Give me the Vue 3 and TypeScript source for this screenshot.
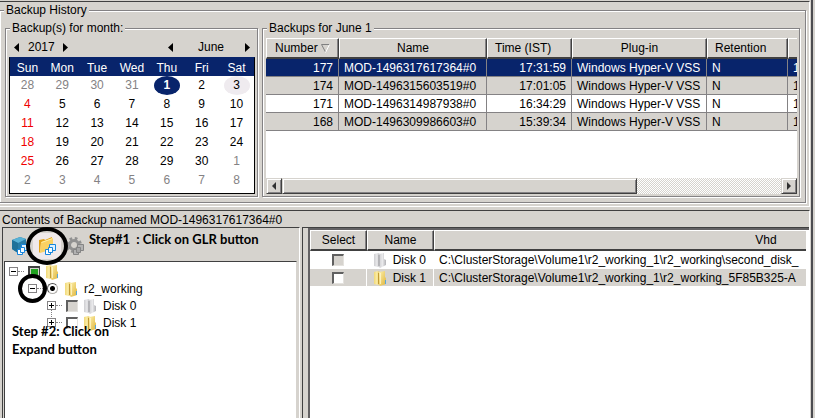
<script setup lang="ts">
import { ref } from 'vue'

interface Backup {
  id: number
  name: string
  time: string
  plugin: string
  retention: string
  extra: string
}
interface Disk {
  name: string
  path: string
  available: boolean
}

const weekdays: string[] = ['Sun', 'Mon', 'Tue', 'Wed', 'Thu', 'Fri', 'Sat']
const firstOffset = -4

const weeks = Array.from({ length: 6 }, (_, w) =>
  Array.from({ length: 7 }, (_, d) => {
    const n = w * 7 + d + 1 + firstOffset
    const outside = n < 1 || n > 30
    const day = n < 1 ? 31 + n : n > 30 ? n - 30 : n
    return { day, outside, sunday: d === 0 && !outside, today: n === 3, key: n }
  }),
)
const selectedDay = ref<number>(1)

const backups: Backup[] = [
  { id: 177, name: 'MOD-1496317617364#0', time: '17:31:59', plugin: 'Windows Hyper-V VSS', retention: 'N', extra: '1' },
  { id: 174, name: 'MOD-1496315603519#0', time: '17:01:05', plugin: 'Windows Hyper-V VSS', retention: 'N', extra: '1' },
  { id: 171, name: 'MOD-1496314987938#0', time: '16:34:29', plugin: 'Windows Hyper-V VSS', retention: 'N', extra: '1' },
  { id: 168, name: 'MOD-1496309986603#0', time: '15:39:34', plugin: 'Windows Hyper-V VSS', retention: 'N', extra: '1' },
]
const selectedBackup = ref<number>(177)

const disks: Disk[] = [
  { name: 'Disk 0', path: 'C:\\ClusterStorage\\Volume1\\r2_working_1\\r2_working\\second_disk_', available: false },
  { name: 'Disk 1', path: 'C:\\ClusterStorage\\Volume1\\r2_working_1\\r2_working_5F85B325-A', available: true },
]
</script>

<template>
  <main class="window">
    <section class="upper">
      <fieldset class="group history">
        <legend>Backup History</legend>
        <div class="columns">
          <fieldset class="group month">
            <legend>Backup(s) for month:</legend>
            <div class="nav">
              <button type="button" class="step" aria-label="Previous year"><svg width="5" height="9" viewBox="0 0 5 9"><path d="M5 0v9L0 4.500z" /></svg></button>
              <span class="year">2017</span>
              <button type="button" class="step" aria-label="Next year"><svg width="5" height="9" viewBox="0 0 5 9"><path d="M0 0v9l5-4.500z" /></svg></button>
              <button type="button" class="step month-prev" aria-label="Previous month"><svg width="5" height="9" viewBox="0 0 5 9"><path d="M5 0v9L0 4.500z" /></svg></button>
              <span class="month-name">June</span>
              <button type="button" class="step" aria-label="Next month"><svg width="5" height="9" viewBox="0 0 5 9"><path d="M0 0v9l5-4.500z" /></svg></button>
            </div>
            <div class="calendar-box">
              <table class="calendar">
                <thead>
                  <tr><th v-for="w in weekdays" :key="w">{{ w }}</th></tr>
                </thead>
                <tbody>
                  <tr v-for="(week, i) in weeks" :key="i">
                    <td v-for="d in week" :key="d.key">
                      <button
                        type="button"
                        class="day"
                        :class="{ outside: d.outside, sunday: d.sunday, today: d.today, selected: d.key === selectedDay }"
                        @click="selectedDay = d.key"
                      >{{ d.day }}</button>
                    </td>
                  </tr>
                </tbody>
              </table>
            </div>
          </fieldset>

          <fieldset class="group list">
            <legend>Backups for June 1</legend>
            <div class="list-view">
              <table class="backups">
                <colgroup>
                  <col class="c-number" /><col class="c-name" /><col class="c-time" /><col class="c-plugin" /><col class="c-ret" /><col class="c-extra" />
                </colgroup>
                <thead>
                  <tr>
                    <th>Number
                      <svg class="sort" width="9" height="9" viewBox="0 0 9 9"><path d="M4.500 8L.5.500h8" fill="none" stroke="#808080" /><path d="M8.500.500l-4 8" stroke="#fff" /></svg>
                    </th>
                    <th>Name</th>
                    <th class="start">Time (IST)</th>
                    <th>Plug-in</th>
                    <th class="start">Retention</th>
                    <th></th>
                  </tr>
                </thead>
                <tbody>
                  <tr v-for="b in backups" :key="b.id" :class="{ selected: b.id === selectedBackup }" @click="selectedBackup = b.id">
                    <td class="num">{{ b.id }}</td>
                    <td>{{ b.name }}</td>
                    <td class="num">{{ b.time }}</td>
                    <td>{{ b.plugin }}</td>
                    <td>{{ b.retention }}</td>
                    <td>{{ b.extra }}</td>
                  </tr>
                </tbody>
              </table>
            </div>
            <div class="scrollbar">
              <button type="button" class="raised arrow" aria-label="Scroll left"><svg width="4" height="8" viewBox="0 0 4 8"><path d="M4 0v8L0 4z" /></svg></button>
              <div class="raised thumb"></div>
              <div class="track"></div>
              <button type="button" class="raised arrow" aria-label="Scroll right"><svg width="4" height="8" viewBox="0 0 4 8"><path d="M0 0v8l4-4z" /></svg></button>
            </div>
          </fieldset>
        </div>
      </fieldset>
    </section>

    <svg class="defs" width="0" height="0" aria-hidden="true">
      <defs>
        <linearGradient id="gold" x1="0" x2="1">
          <stop offset="0" stop-color="#f1d978" /><stop offset=".5" stop-color="#fbeca6" /><stop offset="1" stop-color="#dcb94a" />
        </linearGradient>
        <linearGradient id="gold-front" x1="0" x2="1" y2="1">
          <stop offset="0" stop-color="#fdf0ac" /><stop offset="1" stop-color="#dfb43a" />
        </linearGradient>
        <linearGradient id="silver" x1="0" x2="1">
          <stop offset="0" stop-color="#cfcfd2" /><stop offset=".5" stop-color="#e9e9eb" /><stop offset="1" stop-color="#b2b2b6" />
        </linearGradient>
        <symbol id="folder" viewBox="0 0 14 16">
          <path d="M1 2l4-1 2 1v12l-2 1-4-1z" fill="url(#gold)" />
          <path d="M6 2l6-1v6l1 1v6l-6 2-1-1z" fill="url(#gold-front)" />
          <path d="M5.500 3v11" stroke="#c29b35" />
          <path d="M7.500 3v11" stroke="#fff6cb" stroke-opacity=".8" />
          <path d="M12.500 10v4" stroke="#58a6d8" />
        </symbol>
        <symbol id="folder-grey" viewBox="0 0 14 16">
          <path d="M1 2l4-1 2 1v12l-2 1-4-1z" fill="url(#silver)" />
          <path d="M6 2l5-1v6l2 1v5l-6 3-1-1z" fill="url(#silver)" />
          <path d="M6 3v11" stroke="#98989c" />
        </symbol>
        <symbol id="copies" viewBox="0 0 11 11">
          <path d="M4.500.500h6v6h-6z" fill="#dff1ff" stroke="#1685dc" />
          <path d="M.5 5.500h5v5h-5z" fill="#fff" stroke="#1685dc" />
          <path d="M3.500 3.500h4v5h-4z" fill="#f4fbff" stroke="#1685dc" />
        </symbol>
        <symbol id="copies-grey" viewBox="0 0 11 11">
          <path d="M4.500.500h6v6h-6zM.5 5.500h5v5h-5z" fill="#b2b2b2" stroke="#858585" />
          <path d="M3.500 3.500h4v5h-4z" fill="#a6a6a6" stroke="#858585" />
        </symbol>
      </defs>
    </svg>

    <section class="lower">
      <h2 class="title">Contents of Backup named MOD-1496317617364#0</h2>
      <div class="panes">
        <div class="tree-pane">
          <div class="toolbar">
            <button type="button" class="tool" aria-label="Restore virtual machine">
              <svg width="18" height="20" viewBox="0 0 18 20">
                <path d="M2 4l8-3 6 2v10l-8 4-6-4z" fill="#287da8" />
                <path d="M2 4l8-3 6 2-8 4z" fill="#58b1d5" />
                <path d="M2 4l6 3v10l-6-4z" fill="#1f7199" />
                <use href="#copies" x="7" y="8" width="11" height="11" />
              </svg>
            </button>
            <button type="button" class="tool active" aria-label="GLR">
              <svg width="18" height="20" viewBox="0 0 18 20">
                <path d="M1 4l5-1 1 1 7-3v3l-11 3-1 10-1-1z" fill="#e2a21a" />
                <path d="M3 6l12-4v11L2 17z" fill="#fbd162" />
                <path d="M3.500 6.500l11-4" stroke="#fff0a5" />
                <use href="#copies" x="7" y="8" width="11" height="11" />
              </svg>
              <span class="ring ring-tool"></span>
            </button>
            <button type="button" class="tool" aria-label="Settings">
              <svg width="18" height="20" viewBox="0 0 18 20">
                <circle cx="8" cy="9" r="4.500" fill="none" stroke="#919191" stroke-width="3" />
                <circle cx="8" cy="9" r="6.500" fill="none" stroke="#919191" stroke-width="3" stroke-dasharray="2.600 2.500" />
                <use href="#copies-grey" x="7" y="8" width="11" height="11" />
              </svg>
            </button>
            <span class="hint">Step#1&nbsp; : Click on GLR button</span>
          </div>

          <div class="tree">
            <div class="node">
              <button type="button" class="expander" aria-label="Collapse root"><svg width="9" height="9" viewBox="0 0 9 9"><path d="M2 4.500h5" /></svg></button>
              <span class="link"></span>
              <input type="checkbox" class="box partial" aria-label="Select root" />
              <svg class="icon" width="14" height="16"><use href="#folder" /></svg>
            </div>
            <div class="node level-1">
              <button type="button" class="expander ringed" aria-label="Collapse r2_working"><svg width="9" height="9" viewBox="0 0 9 9"><path d="M2 4.500h5" /></svg><span class="ring ring-node"></span></button>
              <span class="link"></span>
              <input id="vm" type="radio" class="radio" name="vm" checked />
              <svg class="icon" width="14" height="16"><use href="#folder" /></svg>
              <label for="vm">r2_working</label>
            </div>
            <div v-for="(d, i) in disks" :key="d.name" class="node level-2" :class="{ last: i === disks.length - 1 }">
              <button type="button" class="expander" :aria-label="'Expand ' + d.name"><svg width="9" height="9" viewBox="0 0 9 9"><path d="M2 4.500h5M4.500 2v5" /></svg></button>
              <span class="link"></span>
              <input :id="'node-' + i" type="checkbox" class="box" :disabled="!d.available" />
              <svg class="icon" width="14" height="16"><use :href="d.available ? '#folder' : '#folder-grey'" /></svg>
              <label :for="'node-' + i">{{ d.name }}</label>
            </div>
            <p class="hint hint-expand">Step #2: Click on<br />Expand button</p>
          </div>
        </div>

        <div class="disk-pane">
          <div class="disk-view">
            <table class="disks">
              <colgroup><col class="d-select" /><col class="d-name" /><col class="d-vhd" /></colgroup>
              <thead>
                <tr><th>Select</th><th>Name</th><th>Vhd</th></tr>
              </thead>
              <tbody>
                <tr v-for="(d, i) in disks" :key="d.name">
                  <td class="pick"><input :id="'disk-' + i" type="checkbox" class="box" :disabled="!d.available" /></td>
                  <td class="disk-name">
                    <label :for="'disk-' + i"><svg width="14" height="16"><use :href="d.available ? '#folder' : '#folder-grey'" /></svg>{{ d.name }}</label>
                  </td>
                  <td>{{ d.path }}</td>
                </tr>
              </tbody>
            </table>
          </div>
        </div>
      </div>
    </section>
  </main>
</template>

<style>
body {
  margin: 0;
  background: #d6d3ce;
}
</style>

<style scoped>
* {
  box-sizing: border-box;
}
.window {
  display: flex;
  flex-direction: column;
  min-height: 100vh;
  margin-right: 2px;
  padding: 1px 1px 0 0;
  border-right: 2px solid #4c4c50;
  overflow: hidden;
  background: #d6d3ce;
  color: #000;
  font: 12px/14px 'Liberation Sans', Arial, sans-serif;
}
button {
  margin: 0;
  padding: 0;
  border: 0;
  background: none;
  color: inherit;
  font: inherit;
}
table {
  border-collapse: separate;
  border-spacing: 0;
  table-layout: fixed;
}
th,
td {
  padding: 0;
  font-weight: normal;
  white-space: nowrap;
}
.defs {
  position: absolute;
}

.upper {
  padding: 1px 3px 3px 0;
  border-top: 1px solid #404040;
  border-right: 1px solid #fff;
  border-bottom: 1px solid #fff;
}
.group {
  min-width: 0;
  margin: 0;
  border: 1px solid #848284;
  box-shadow: 1px 1px #fff, inset 1px 1px #fff;
}
legend {
  height: 14px;
  padding: 0 2px;
  background: #d6d3ce;
}
.history {
  margin-left: -1px;
  padding: 4px 5px 5px;
}
.history > legend {
  margin-left: -1px;
}
.columns {
  display: grid;
  grid-template-columns: 253px minmax(0, 1fr);
  gap: 4px;
}
.month {
  padding: 0 2px 2px 3px;
}
.month > legend {
  margin-left: 1px;
}
.nav {
  display: flex;
  align-items: center;
  height: 22px;
  padding: 2px 5px 0;
}
.step {
  display: flex;
}
.year {
  margin: 0 8px 0 9px;
}
.month-prev {
  margin-left: auto;
}
.month-name {
  width: 72px;
  padding-left: 4px;
  text-align: center;
}
.calendar-box {
  padding-bottom: 3px;
  border: 1px solid #000;
  border-top-color: #08246b;
  background: #fff;
}
.calendar {
  width: 100%;
}
.calendar th {
  height: 18px;
  padding-top: 2px;
  background: #08246b;
  color: #fff;
}
.calendar td {
  height: 19px;
  text-align: center;
}
.day {
  display: block;
  width: 26px;
  height: 19px;
  margin: 0 auto;
  border-radius: 50%;
  line-height: 19px;
}
.outside {
  color: #848284;
}
.sunday {
  color: #f00000;
}
.today {
  background: #efebef;
}
.selected.day {
  background: #08246b;
  color: #fff;
  font-weight: bold;
}

.list {
  display: flex;
  flex-direction: column;
  padding: 3px 2px 2px 3px;
}
.list > legend {
  margin-left: 1px;
}
.list-view {
  height: 140px;
  overflow: hidden;
  background: #fff;
}
.backups {
  width: 602px;
}
.c-number {
  width: 73px;
}
.c-name {
  width: 148px;
}
.c-time {
  width: 85px;
}
.c-plugin {
  width: 135px;
}
.c-ret {
  width: 81px;
}
.c-extra {
  width: 80px;
}
.backups th,
.disks th {
  height: 21px;
  border: 1px solid #fff;
  border-right-color: #404040;
  border-bottom: 2px solid #404040;
  background: #d6d3ce;
  box-shadow: inset -1px 0 #848284;
  text-align: center;
}
.backups th.start {
  padding-left: 7px;
  text-align: left;
}
.sort {
  vertical-align: -1px;
}
.backups td {
  height: 18px;
  padding: 0 5px;
  border-right: 1px solid #848284;
  border-bottom: 1px solid #848284;
}
.backups .num {
  text-align: right;
}
.backups tbody tr:nth-child(even) {
  background: #d6d3ce;
}
.backups tbody .selected {
  background: #08246b;
  color: #fff;
}
.scrollbar {
  display: grid;
  grid-template-columns: 16px 354fr 144fr 16px;
  height: 16px;
}
.raised {
  border: 1px solid #d6d3ce;
  border-right-color: #404040;
  border-bottom-color: #404040;
  background: #d6d3ce;
  box-shadow: inset 1px 1px #fff, inset -1px -1px #848284;
}
.arrow {
  display: flex;
  align-items: center;
  justify-content: center;
}
.arrow svg {
  fill: #303030;
}
.track {
  background: repeating-conic-gradient(#fff 0 25%, #d6d3ce 0 50%) 0 0 / 2px 2px;
}

.lower {
  display: flex;
  flex: 1;
  flex-direction: column;
  margin-top: 3px;
  border-top: 1px solid #404040;
  border-right: 1px solid #fff;
}
.title {
  height: 16px;
  margin: 0;
  padding-left: 2px;
  font-size: 12px;
  font-weight: normal;
  line-height: 18px;
  white-space: nowrap;
}
.panes {
  display: grid;
  flex: 1;
  grid-template-columns: 298px minmax(0, 1fr);
  gap: 2px;
  padding-left: 2px;
}
.tree-pane {
  display: flex;
  flex-direction: column;
  padding: 0 2px 0 1px;
  border-top: 1px solid #404040;
  border-left: 1px solid #404040;
  border-right: 1px solid #fff;
}
.toolbar {
  position: relative;
  z-index: 1;
  display: flex;
  align-items: flex-start;
  height: 33px;
  padding: 2px 0 0 1px;
}
.tool {
  position: relative;
  display: flex;
  align-items: center;
  justify-content: center;
  width: 28px;
  height: 26px;
  margin-top: 3px;
}
.active {
  z-index: 1;
  background: #efe9ea;
}
.hint {
  font: bold 13px/18px Lato, Carlito, Calibri, sans-serif;
  white-space: nowrap;
}
.ring {
  position: absolute;
  border: 4px solid #000;
  border-radius: 50%;
  pointer-events: none;
}
.ring-tool {
  inset: -6px -7px;
}
.ring-node {
  inset: -11px;
}
.tree {
  position: relative;
  flex: 1;
  padding: 1px 0 0 4px;
  border: 1px solid #d6d3ce;
  border-top-color: #404040;
  border-left-color: #404040;
  border-bottom: 0;
  background: #fff;
}
.node {
  position: relative;
  display: flex;
  align-items: center;
  height: 17px;
}
.level-1 {
  padding-left: 19px;
}
.level-2 {
  padding-left: 38px;
}
.level-2:not(.last)::before {
  content: '';
  position: absolute;
  top: 13px;
  left: 42px;
  height: 9px;
  border-left: 1px dotted #848284;
}
.expander {
  position: relative;
  display: flex;
  border: 1px solid #848284;
  width: 9px;
  height: 9px;
  background: #fff;
}
.expander svg {
  margin: -1px;
  flex: none;
  stroke: #000;
}
.ringed {
  z-index: 1;
}
.link {
  width: 6px;
  border-top: 1px dotted #848284;
}
.box {
  appearance: none;
  width: 12px;
  height: 12px;
  margin: 0;
  border: 1px solid #e4e2de;
  border-top: 2px solid #606060;
  border-left: 2px solid #606060;
  background: #fff;
}
.box:disabled {
  background: #d6d3ce;
}
.node .box {
  margin: 0 5px 0 4px;
}
.partial {
  border-color: #404040;
  background: #21a221;
  box-shadow: inset 0 0 0 1px #d6d3ce;
}
.radio {
  appearance: none;
  width: 11px;
  height: 11px;
  margin: 0 6px 0 4px;
  border: 1px solid #b0aeaa;
  border-top-color: #505050;
  border-left-color: #505050;
  border-radius: 50%;
  background: radial-gradient(circle, #000 2px, #fff 3px);
}
.icon {
  flex: none;
  margin-right: 6px;
}
.hint-expand {
  position: absolute;
  top: 60px;
  left: 7px;
  margin: 0;
}

.disk-pane {
  display: flex;
  padding-left: 5px;
  border-top: 1px solid #404040;
  border-left: 1px solid #404040;
}
.disk-view {
  flex: 1;
  min-width: 0;
  padding-right: 3px;
  border-top: 2px solid #636163;
  border-left: 2px solid #636163;
  overflow: clip;
  overflow-clip-margin: content-box;
  background: #fff;
}
.disks {
  width: 788px;
}
.d-select {
  width: 57px;
}
.d-name {
  width: 67px;
}
.d-vhd {
  width: 664px;
}
.disks td {
  height: 18px;
  border-right: 1px solid #fff;
  border-bottom: 1px solid #fff;
}
.disks td:last-child {
  padding-left: 5px;
}
.disks tbody tr:nth-child(even) {
  background: #d6d3ce;
}
.pick {
  text-align: center;
}
.pick .box {
  display: block;
  margin: 0 auto;
}
.disk-name label {
  display: flex;
  align-items: center;
  justify-content: flex-end;
  gap: 6px;
  padding-right: 7px;
}
</style>
